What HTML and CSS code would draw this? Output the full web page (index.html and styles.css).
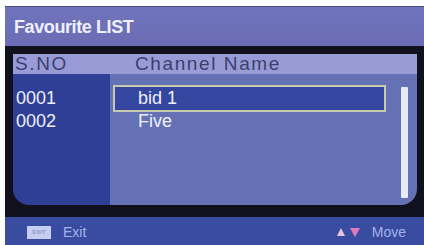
FILE: index.html
```html
<!DOCTYPE html>
<html>
<head>
<meta charset="utf-8">
<link rel="stylesheet" href="styles.css">
</head>
<body>
<div class="screen">
  <div class="titlebar">Favourite LIST</div>
  <div class="frame">
    <div class="inner">
      <div class="head">
        <div class="hcell sno">S.NO</div>
        <div class="hcell cname">Channel Name</div>
      </div>
      <div class="body">
        <div class="numcol">
          <div class="num">0001</div>
          <div class="num">0002</div>
        </div>
        <div class="chcol">
          <div class="list">
            <div class="item sel">bid 1</div>
            <div class="item">Five</div>
          </div>
          <div class="scroll"></div>
        </div>
      </div>
    </div>
  </div>
  <div class="footer">
    <div class="hint">
      <span class="key">EXIT</span>
      <span class="label">Exit</span>
    </div>
    <div class="hint">
      <span class="arrows"><span class="up"></span><span class="down"></span></span>
      <span class="label">Move</span>
    </div>
  </div>
</div>
</body>
</html>
```

FILE: styles.css
```css
html, body {
  margin: 0;
  padding: 0;
  background: #ffffff;
}
body {
  width: 424px;
  height: 245px;
  overflow: hidden;
  font-family: "Liberation Sans", Arial, sans-serif;
}
.screen {
  margin: 6px 0 0 5px;
  width: 419px;
  height: 239px;
  display: flex;
  flex-direction: column;
  background: #11121f;
}
.titlebar {
  height: 40px;
  box-sizing: border-box;
  border-top: 1px solid #4a4c80;
  background: linear-gradient(#7074bc, #6a6db4);
  color: #eef0fb;
  font-weight: bold;
  font-size: 18px;
  letter-spacing: -0.4px;
  padding-left: 9px;
  display: flex;
  align-items: center;
  padding-top: 2px;
}
.frame {
  background: #10111c;
  padding: 8px 7px 12px 8px;
  height: 171px;
  box-sizing: border-box;
}
.inner {
  height: 100%;
  border-radius: 0 0 16px 16px;
  overflow: hidden;
  display: flex;
  flex-direction: column;
}
.head {
  height: 20px;
  background: #989bd6;
  display: grid;
  grid-template-columns: 97px 1fr;
  align-items: center;
  color: #3c4070;
  font-size: 19px;
  letter-spacing: 1.6px;
  line-height: 20px;
}
.hcell {
  white-space: nowrap;
}
.sno { padding-left: 2px; }
.cname { padding-left: 25px; }
.body {
  flex: 1;
  display: grid;
  grid-template-columns: 97px 1fr;
}
.numcol {
  background: #2f3f95;
  padding-top: 13px;
  padding-left: 3px;
}
.num, .item {
  height: 23px;
  line-height: 23px;
  font-size: 18px;
  color: #eef0fb;
}
.chcol {
  background: #6571b5;
  display: flex;
  padding: 13px 8px 7px 5px;
  gap: 17px;
}
.list {
  width: 269px;
}
.item {
  padding-left: 23px;
}
.item.sel {
  background: #3546a0;
  outline: 2px solid #c6c9ac;
}
.scroll {
  width: 7px;
  height: 111px;
  background: #e8eaf8;
  border-radius: 1px;
}
.footer {
  flex: 1;
  background: #3a4c9f;
  display: flex;
  justify-content: space-between;
  align-items: center;
  padding: 2px 18px 0 22px;
}
.hint {
  display: flex;
  align-items: center;
  gap: 12px;
}
.key {
  width: 24px;
  height: 13px;
  background: #c5cdf0;
  color: #8f98d0;
  font-size: 6px;
  line-height: 13px;
  text-align: center;
  font-weight: bold;
}
.label {
  color: #a3b2ea;
  font-size: 14px;
}
.arrows {
  display: flex;
  align-items: center;
  gap: 5px;
}
.up {
  width: 0;
  height: 0;
  border-left: 4.5px solid transparent;
  border-right: 4.5px solid transparent;
  border-bottom: 8px solid #e7c6dc;
}
.down {
  width: 0;
  height: 0;
  border-left: 5.5px solid transparent;
  border-right: 5.5px solid transparent;
  border-top: 9px solid #e27cbf;
}
```
